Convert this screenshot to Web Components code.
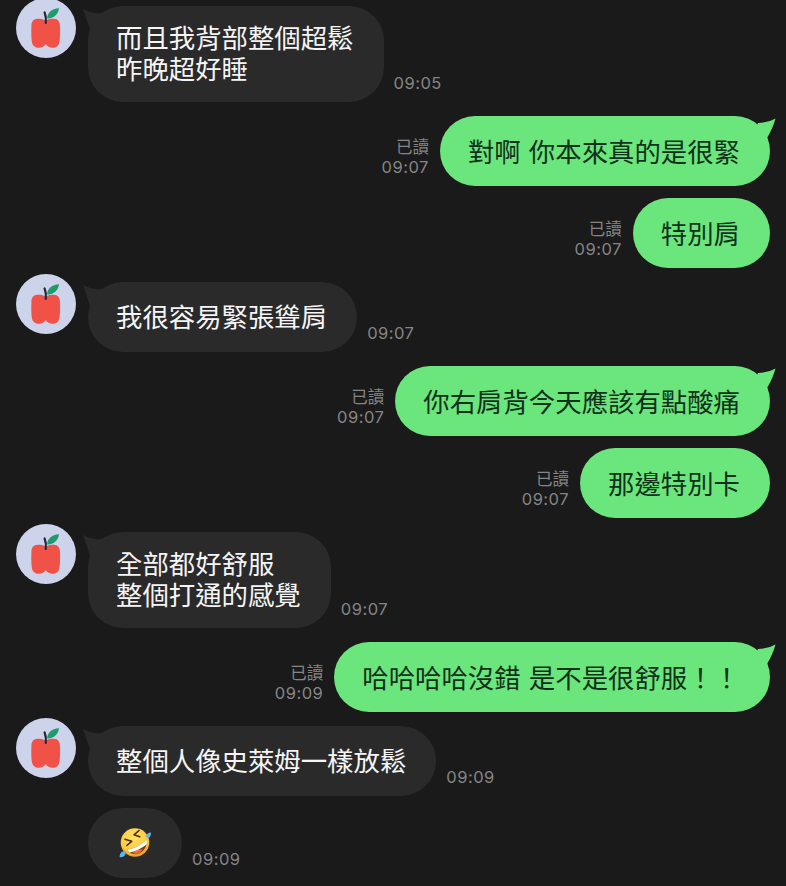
<!DOCTYPE html>
<html lang="zh-Hant">
<head>
<meta charset="utf-8">
<title>chat</title>
<style>
html,body{margin:0;background:#1a1a1b;}
body{height:886px;overflow:hidden;}
</style>
</head>
<body>
<chat-thread>
  <chat-in time="09:05">而且我背部整個超鬆<br>昨晚超好睡</chat-in>
  <chat-out time="09:07">對啊 你本來真的是很緊</chat-out>
  <chat-out time="09:07" notail>特別肩</chat-out>
  <chat-in time="09:07">我很容易緊張聳肩</chat-in>
  <chat-out time="09:07">你右肩背今天應該有點酸痛</chat-out>
  <chat-out time="09:07" notail>那邊特別卡</chat-out>
  <chat-in time="09:07">全部都好舒服<br>整個打通的感覺</chat-in>
  <chat-out time="09:09">哈哈哈哈沒錯 是不是很舒服！！</chat-out>
  <chat-in time="09:09">整個人像史萊姆一樣放鬆</chat-in>
  <chat-in time="09:09" notail emoji><rofl-emoji></rofl-emoji></chat-in>
</chat-thread>
<script>
class ChatThread extends HTMLElement {
    constructor() {
        super();
        this.attachShadow({ mode: 'open' })
    }
    connectedCallback() {
        this.shadowRoot.innerHTML = `
            <style>
            :host{
                display: flex;
                flex-direction: column;
                padding-top: 6px;
                gap: 14px;
                font-family: 'Noto Sans CJK TC', 'Noto Sans', sans-serif;
            }
            ::slotted([notail]){
                margin-top: -2px;
            }
            </style>
            <slot></slot>
        `;
    }
}
customElements.define('chat-thread', ChatThread);

class ChatAvatar extends HTMLElement {
    constructor() {
        super();
        this.attachShadow({ mode: 'open' })
    }
    connectedCallback() {
        this.shadowRoot.innerHTML = `
            <style>
            :host{
                display: block;
                width: 60px;
                height: 60px;
                border-radius: 50%;
                background: #ccd3ea;
                overflow: hidden;
            }
            svg{ display: block; }
            </style>
            <svg width="60" height="60" viewBox="0 0 60 60">
                <path d="M29.7 22.5C27 21 24 20.7 21.5 20.8C17.5 21 15.5 23.5 15.4 28C15.2 33 15.2 39 15.8 43.5C16.3 47.5 19 49.8 23 49.8C26 49.8 28 48.5 29.7 46C31.4 48.5 33.5 49.8 36.5 49.8C40.5 49.8 43 47.5 43.5 43.5C44.2 39 44.2 33 44 28C43.9 23.5 41.9 21 37.9 20.8C35.4 20.7 32.4 21 29.7 22.5Z" fill="#f15247"/>
                <path d="M28.6 14.5C29.8 17.5 30.2 21 29.8 25" stroke="#1f2a3a" stroke-width="2.2" stroke-linecap="round" fill="none"/>
                <path d="M31.2 20.5C31 15.5 35.5 10.5 43 10.3C42.5 16 37.5 20.8 31.2 20.5Z" fill="#1e9b6a"/>
            </svg>
        `;
    }
}
customElements.define('chat-avatar', ChatAvatar);

class RoflEmoji extends HTMLElement {
    constructor() {
        super();
        this.attachShadow({ mode: 'open' })
    }
    connectedCallback() {
        this.shadowRoot.innerHTML = `
            <style>
            :host{ display: block; width: 32px; height: 32px; }
            svg{ display: block; }
            </style>
            <svg width="32" height="32" viewBox="0 0 32 32">
                <defs>
                    <radialGradient id="f" cx="45%" cy="30%" r="72%">
                        <stop offset="0" stop-color="#ffe264"/>
                        <stop offset="0.7" stop-color="#fcc93c"/>
                        <stop offset="1" stop-color="#ef9522"/>
                    </radialGradient>
                </defs>
                <circle cx="16" cy="15.5" r="14.3" fill="url(#f)"/>
                <path d="M8 22.8C15 21.8 22.5 17.6 27.6 12.2C28.6 19 24.6 25.6 18.6 27C14 27.8 10 26 8 22.8Z" fill="#7a3c16"/>
                <path d="M13.5 25.6C16 23.4 20.5 22.2 23.8 22.6C22.4 24.8 20.6 26.3 18.4 26.8C16.6 27.1 15 26.6 13.5 25.6Z" fill="#e9703a"/>
                <path d="M8 22.8C15 21.8 22.5 17.6 27.6 12.2C28 14.2 28 15.8 27.7 17.2C23 21 16.5 24.6 10.6 25.4C9.4 24.6 8.6 23.7 8 22.8Z" fill="#fff"/>
                <path d="M6 12.2L12.7 14.3L7.8 18.5M20 3.5L15 7.8L20.8 9.8" fill="none" stroke="#4a2a14" stroke-width="1.6" stroke-linecap="round" stroke-linejoin="round"/>
                <path d="M27 8.6C27.6 6.8 29.5 5.8 32 5.6C32 8 31.4 10.2 29.8 11C28.4 11.6 26.6 10.2 27 8.6Z" fill="#5fb4ee"/>
                <path d="M6.8 24.6C7 26.6 6.3 28.6 4.6 29.6C3.4 30.2 1.8 30.3 .6 30.2C.5 28.4 1.2 26.2 2.6 25C3.8 24 5.5 23.9 6.8 24.6Z" fill="#5fb4ee"/>
            </svg>
        `;
    }
}
customElements.define('rofl-emoji', RoflEmoji);

class ChatIn extends HTMLElement {
    constructor() {
        super();
        this.attachShadow({ mode: 'open' })
    }
    connectedCallback() {
        const tail = !this.hasAttribute('notail');
        const pad = this.hasAttribute('emoji') ? '0 31px' : '15px 30px 19px 28px';
        this.shadowRoot.innerHTML = `
            <style>
            :host{
                display: flex;
                align-items: flex-end;
                padding-left: 88px;
                gap: 10px;
            }
            .wrap{
                position: relative;
            }
            chat-avatar{
                position: absolute;
                left: -72px;
                top: -8px;
            }
            .tail{
                position: absolute;
                left: -6px;
                top: 2px;
            }
            .bubble{
                display: flex;
                flex-direction: column;
                justify-content: center;
                box-sizing: border-box;
                min-height: 70px;
                padding: ${pad};
                border-radius: 35px;
                background: #2a2a2b;
                color: #f5f5f5;
                font-size: 26.4px;
                line-height: 31px;
                word-spacing: 1.3px;
                white-space: nowrap;
            }
            .time{
                color: #858585;
                font: 16.5px/20px Inter, 'Noto Sans', sans-serif;
                letter-spacing: .5px;
                padding-bottom: 9px;
            }
            </style>
            <div class="wrap">
                ${tail ? `<chat-avatar></chat-avatar>
                <svg class="tail" width="30" height="24" viewBox="0 0 30 24"><path d="M1 1Q10 6 20 5L22 22H8Q5 12 1 1Z" fill="#2a2a2b"/></svg>` : ''}
                <div class="bubble"><div><slot></slot></div></div>
            </div>
            <div class="time">${this.getAttribute('time')}</div>
        `;
    }
}
customElements.define('chat-in', ChatIn);

class ChatOut extends HTMLElement {
    constructor() {
        super();
        this.attachShadow({ mode: 'open' })
    }
    connectedCallback() {
        const tail = !this.hasAttribute('notail');
        this.shadowRoot.innerHTML = `
            <style>
            :host{
                display: flex;
                justify-content: flex-end;
                align-items: flex-end;
                padding-right: 16px;
                gap: 11px;
            }
            .wrap{
                position: relative;
            }
            .tail{
                position: absolute;
                right: -6px;
                top: 2px;
            }
            .bubble{
                box-sizing: border-box;
                height: 70px;
                padding: 0 30px 0 28px;
                border-radius: 35px;
                background: #6ae67c;
                color: #12301b;
                font-size: 26.4px;
                line-height: 70px;
                word-spacing: 2.3px;
                white-space: nowrap;
            }
            .meta{
                display: flex;
                flex-direction: column;
                align-items: flex-end;
                color: #858585;
                font: 16.5px/20px Inter, 'Noto Sans', sans-serif;
                letter-spacing: .5px;
                padding-bottom: 9px;
            }
            .read{
                font-family: 'Noto Sans CJK TC', sans-serif;
                font-size: 16.5px;
                line-height: 22px;
                letter-spacing: 0;
            }
            </style>
            <div class="meta">
                <div class="read">已讀</div>
                <div>${this.getAttribute('time')}</div>
            </div>
            <div class="wrap">
                ${tail ? `<svg class="tail" width="30" height="24" viewBox="0 0 30 24"><path d="M29.5 .5Q22 5 12 5L5 20H21Q27 10 29.5 .5Z" fill="#6ae67c"/></svg>` : ''}
                <div class="bubble"><slot></slot></div>
            </div>
        `;
    }
}
customElements.define('chat-out', ChatOut);
</script>
</body>
</html>
